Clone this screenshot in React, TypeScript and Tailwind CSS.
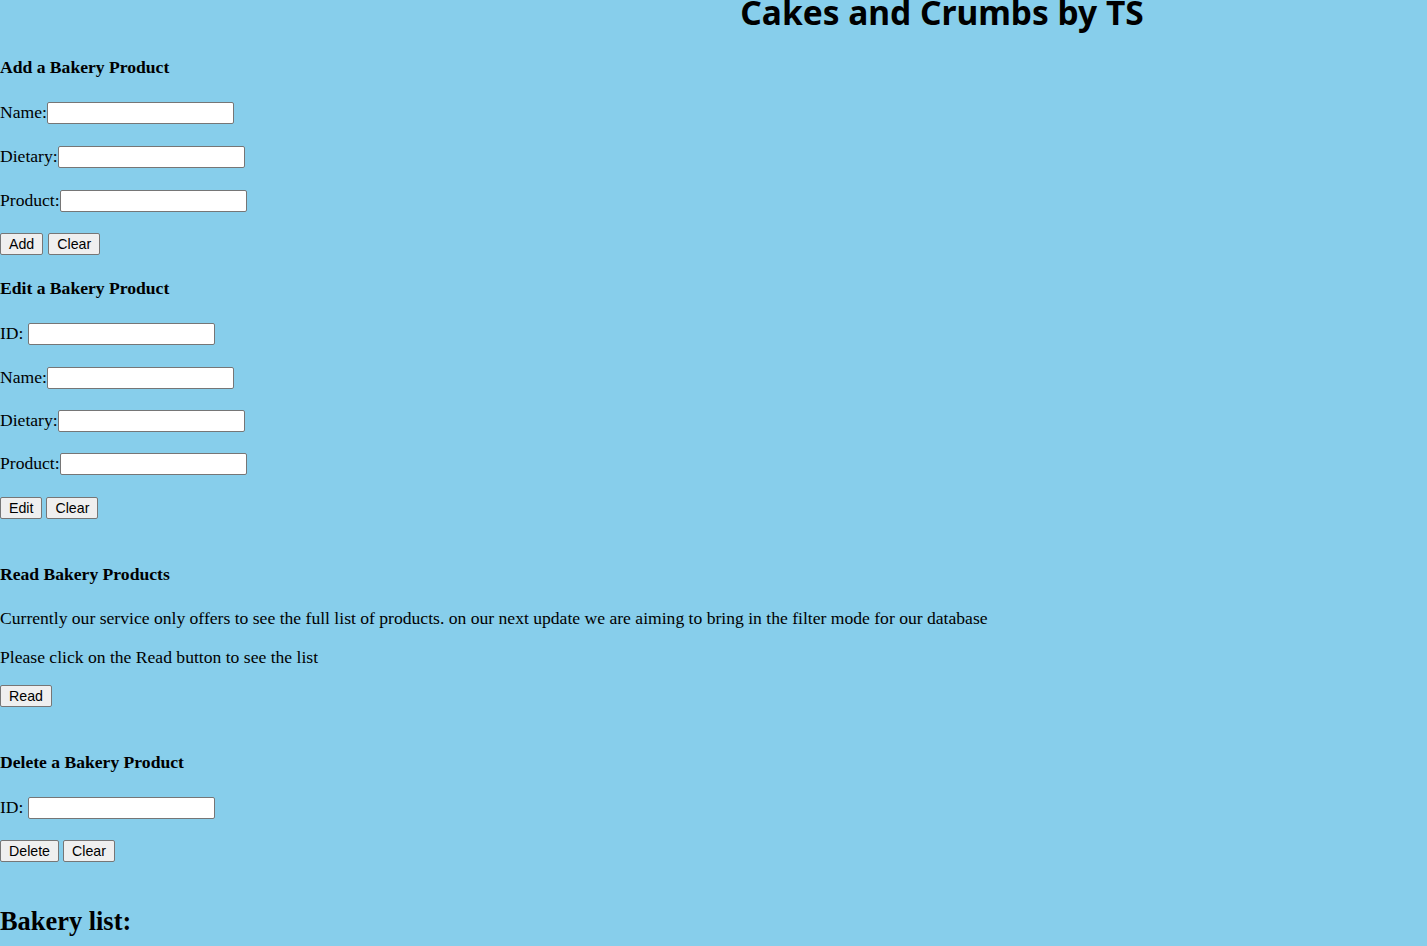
import React from 'react';

const serif = { fontFamily: '"Liberation Serif", "Times New Roman", serif' };

const Field: React.FC<{ label: string; className?: string }> = ({ label, className }) => (
  <div className={`flex items-center h-[22px] text-[17.6px] leading-[20px] ${className ?? ''}`}>
    <span className="whitespace-pre pb-[2px]">{label}</span>
    <input
      type="text"
      className="w-[187px] h-[22px] bg-white border border-[#767676] rounded-[2px] px-[2px] text-[14px] outline-none"
    />
  </div>
);

const Btn: React.FC<{ children: React.ReactNode }> = ({ children }) => (
  <button
    type="button"
    className="h-[22px] px-[8px] bg-[#efefef] border border-[#767676] rounded-[2px] text-[14.2px] leading-[18px] text-black font-['Liberation_Sans',Arial,sans-serif]"
  >
    {children}
  </button>
);

const Heading: React.FC<{ children: React.ReactNode; className?: string }> = ({ children, className }) => (
  <h4 className={`text-[17.6px] leading-[20px] font-bold ${className ?? ''}`}>{children}</h4>
);

export default function App() {
  return (
    <div className="min-h-screen bg-[#87ceeb] text-black flex flex-col" style={serif}>
      {/* title */}
      <h1 className="mt-[-5px] h-[35px] pl-[457px] text-center text-[33.5px] leading-[35px] font-bold font-['Noto_Sans',sans-serif]">
        Cakes and Crumbs by TS
      </h1>

      {/* add */}
      <Heading className="mt-[27px]">Add a Bakery Product</Heading>
      <Field label="Name:" className="mt-[25px]" />
      <Field label="Dietary:" className="mt-[22px]" />
      <Field label="Product:" className="mt-[22px]" />
      <div className="mt-[21px] flex gap-[5px]">
        <Btn>Add</Btn>
        <Btn>Clear</Btn>
      </div>

      {/* edit */}
      <Heading className="mt-[23px]">Edit a Bakery Product</Heading>
      <Field label="ID: " className="mt-[25px]" />
      <Field label="Name:" className="mt-[22px]" />
      <Field label="Dietary:" className="mt-[21px]" />
      <Field label="Product:" className="mt-[21px]" />
      <div className="mt-[22px] flex gap-[4px]">
        <Btn>Edit</Btn>
        <Btn>Clear</Btn>
      </div>

      {/* read */}
      <Heading className="mt-[45px]">Read Bakery Products</Heading>
      <p className="mt-[24px] text-[17.6px] leading-[20px]">
        Currently our service only offers to see the full list of products. on our next update we are aiming to bring in the filter mode for our database
      </p>
      <p className="mt-[19px] text-[17.6px] leading-[20px]">Please click on the Read button to see the list</p>
      <div className="mt-[18px] flex">
        <Btn>Read</Btn>
      </div>

      {/* delete */}
      <Heading className="mt-[45px]">Delete a Bakery Product</Heading>
      <Field label="ID: " className="mt-[25px]" />
      <div className="mt-[21px] flex gap-[4px]">
        <Btn>Delete</Btn>
        <Btn>Clear</Btn>
      </div>

      <h2 className="mt-[44px] text-[26.4px] leading-[30px] font-bold">Bakery list:</h2>
    </div>
  );
}
